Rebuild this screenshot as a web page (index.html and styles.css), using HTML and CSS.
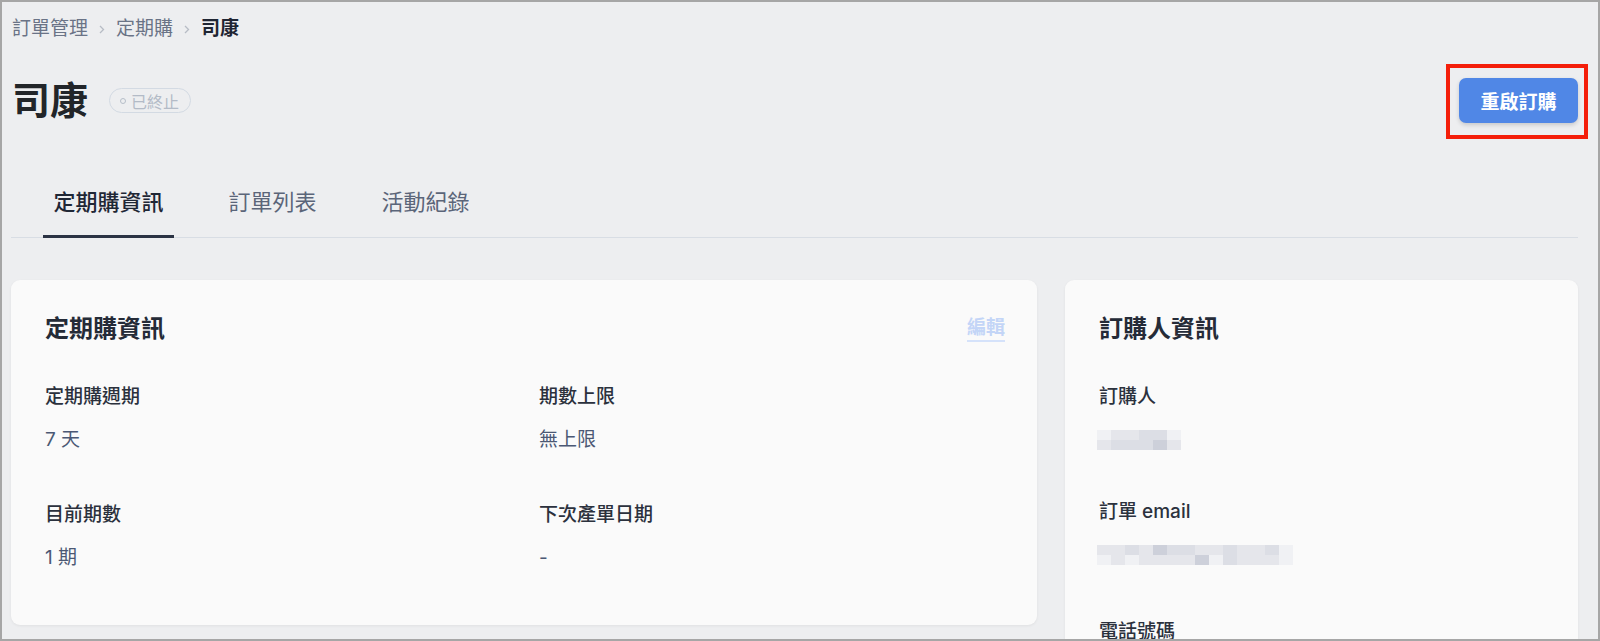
FILE: index.html
```html
<!DOCTYPE html>
<html lang="zh-Hant">
<head>
  <meta charset="UTF-8" />
  <meta name="viewport" content="width=device-width, initial-scale=1.0" />
  <title>司康 - 定期購</title>
  <link rel="stylesheet" href="styles.css">
</head>
<body>
  <div class="frame">
    <nav class="crumbs">
      <a href="#">訂單管理</a>
      <svg class="chev" width="6" height="9" viewBox="0 0 6 9"><path d="M1 1l3.5 3.5L1 8" fill="none" stroke="#b7bcc5" stroke-width="1.3"/></svg>
      <a href="#">定期購</a>
      <svg class="chev" width="6" height="9" viewBox="0 0 6 9"><path d="M1 1l3.5 3.5L1 8" fill="none" stroke="#b7bcc5" stroke-width="1.3"/></svg>
      <span class="current">司康</span>
    </nav>

    <header class="page-head">
      <div class="title-wrap">
        <h1>司康</h1>
        <span class="badge"><i class="dot"></i>已終止</span>
      </div>
      <div class="action">
        <button type="button">重啟訂購</button>
      </div>
    </header>

    <ul class="tabs">
      <li class="active">定期購資訊</li>
      <li>訂單列表</li>
      <li>活動紀錄</li>
    </ul>

    <div class="grid">
      <section class="card">
        <div class="card-head">
          <h2>定期購資訊</h2>
          <a class="edit" href="#">編輯</a>
        </div>
        <div class="fields two">
          <div class="field">
            <div class="label">定期購週期</div>
            <div class="value">7 天</div>
          </div>
          <div class="field">
            <div class="label">期數上限</div>
            <div class="value">無上限</div>
          </div>
          <div class="field">
            <div class="label">目前期數</div>
            <div class="value">1 期</div>
          </div>
          <div class="field">
            <div class="label">下次產單日期</div>
            <div class="value">-</div>
          </div>
        </div>
      </section>

      <section class="card">
        <div class="card-head">
          <h2>訂購人資訊</h2>
        </div>
        <div class="fields one">
          <div class="field">
            <div class="label">訂購人</div>
            <div class="value">
              <div class="pixels">
                <span class="s1"></span><span class="s2"></span><span class="s2"></span><span class="s3"></span><span class="s3"></span><span class="s1"></span>
                <span class="s2"></span><span class="s3"></span><span class="s3"></span><span class="s3"></span><span class="s4"></span><span class="s2"></span>
              </div>
            </div>
          </div>
          <div class="field">
            <div class="label">訂單 email</div>
            <div class="value">
              <div class="pixels wide">
                <span class="s2"></span><span class="s2"></span><span class="s3"></span><span class="s2"></span><span class="s4"></span><span class="s3"></span><span class="s3"></span><span class="s2"></span><span class="s2"></span><span class="s3"></span><span class="s2"></span><span class="s2"></span><span class="s3"></span><span class="s1"></span>
                <span class="s1"></span><span class="s2"></span><span class="s1"></span><span class="s2"></span><span class="s2"></span><span class="s2"></span><span class="s2"></span><span class="s4"></span><span class="s1"></span><span class="s3"></span><span class="s2"></span><span class="s2"></span><span class="s2"></span><span class="s1"></span>
              </div>
            </div>
          </div>
          <div class="field phone">
            <div class="label">電話號碼</div>
            <div class="value">
              <div class="pixels">
                <span class="s2"></span><span class="s3"></span><span class="s2"></span><span class="s3"></span><span class="s2"></span><span class="s1"></span>
                <span class="s3"></span><span class="s2"></span><span class="s4"></span><span class="s2"></span><span class="s3"></span><span class="s2"></span>
              </div>
            </div>
          </div>
        </div>
      </section>
    </div>
  </div>
</body>
</html>
```

FILE: styles.css
```css
html, body { margin: 0; height: 100%; overflow: hidden; }
body { font-family: Inter, "Noto Sans CJK TC", "Noto Sans", sans-serif; background: #edeef0; color: #1f2533; }

.frame { box-sizing: border-box; height: 641px; border: 2px solid #a6a6a6; padding: 0 20px 0 9px; overflow: hidden; background: #edeef0; }

/* breadcrumb */
.crumbs { display: flex; align-items: center; gap: 11px; margin-top: 15px; height: 24px; font-size: 19px; line-height: 24px; padding-left: 1px; }
.crumbs a { color: #6a7386; text-decoration: none; }
.crumbs .chev { display: block; }
.crumbs .current { color: #1f2533; font-weight: 700; }

/* title row */
.page-head { display: flex; align-items: center; justify-content: space-between; margin-top: 37px; height: 45px; }
.title-wrap { display: flex; align-items: center; }
h1 { margin: 0; font-size: 38px; line-height: 45px; font-weight: 700; color: #222529; padding-left: 1px; }
.badge { display: inline-flex; align-items: center; gap: 5px; margin-left: 21px; height: 25px; padding: 0 11px 0 10px; border: 1px solid #d3dae3; border-radius: 13px; font-size: 16px; color: #b3bbc7; box-sizing: border-box; }
.badge .dot { width: 4px; height: 4px; border: 1px solid #b6bec9; border-radius: 50%; }

.action { position: relative; }
.action::after { content: ""; position: absolute; top: -14px; right: -10px; bottom: -16px; left: -13px; border: 4px solid #f41e0a; pointer-events: none; }
.action button { display: block; height: 45px; width: 119px; padding: 0; background: #5087e6; color: #fff; border: none; border-radius: 7px; font-family: inherit; font-size: 19px; font-weight: 700; box-shadow: 0 2px 4px rgba(0,0,0,0.16); cursor: pointer; }

/* tabs */
.tabs { list-style: none; margin: 44px 0 0; padding: 0 0 0 32px; display: flex; gap: 44px; border-bottom: 1px solid #d8dde4; }
.tabs li { padding: 20px 10.5px 18px; font-size: 22px; line-height: 30px; color: #5b6579; border-bottom: 3px solid transparent; margin-bottom: -1px; }
.tabs li.active { color: #1f2736; font-weight: 500; border-bottom-color: #2b3344; }

/* cards */
.grid { display: grid; grid-template-columns: 1026px 513px; gap: 28px; margin-top: 42px; align-items: start; }
.card { background: #fafafa; border-radius: 9px; box-shadow: 0 1px 3px rgba(0,0,0,0.06); padding: 34px 34px 53px; }
.card-head { display: flex; justify-content: space-between; align-items: center; height: 30px; }
.card-head h2 { margin: 0; font-size: 24px; line-height: 30px; font-weight: 700; color: #252b37; }
.edit { color: #c3d5f7; font-size: 19px; line-height: 24px; text-decoration: none; border-bottom: 2px solid #d5e2fa; font-weight: 700; margin-right: -2px; }

.fields { display: grid; margin-top: 39px; }
.fields.two { grid-template-columns: 1fr 1fr; column-gap: 30px; row-gap: 47px; }
.fields.one { grid-template-columns: 1fr; row-gap: 48px; }
.field.phone { margin-top: 5px; }
.field .label { font-size: 19px; line-height: 28px; color: #2b313d; font-weight: 500; }
.field .value { margin-top: 15px; font-size: 19px; line-height: 28px; color: #4b5874; }

.pixels { display: grid; grid-template-columns: repeat(6, 14px); grid-auto-rows: 10px; padding-top: 4px; margin-left: -2px; }
.pixels.wide { grid-template-columns: repeat(14, 14px); }
.pixels .s1 { background: #f0f1f4; }
.pixels .s2 { background: #e5e6eb; }
.pixels .s3 { background: #dcdee5; }
.pixels .s4 { background: #cdd0da; }
```
